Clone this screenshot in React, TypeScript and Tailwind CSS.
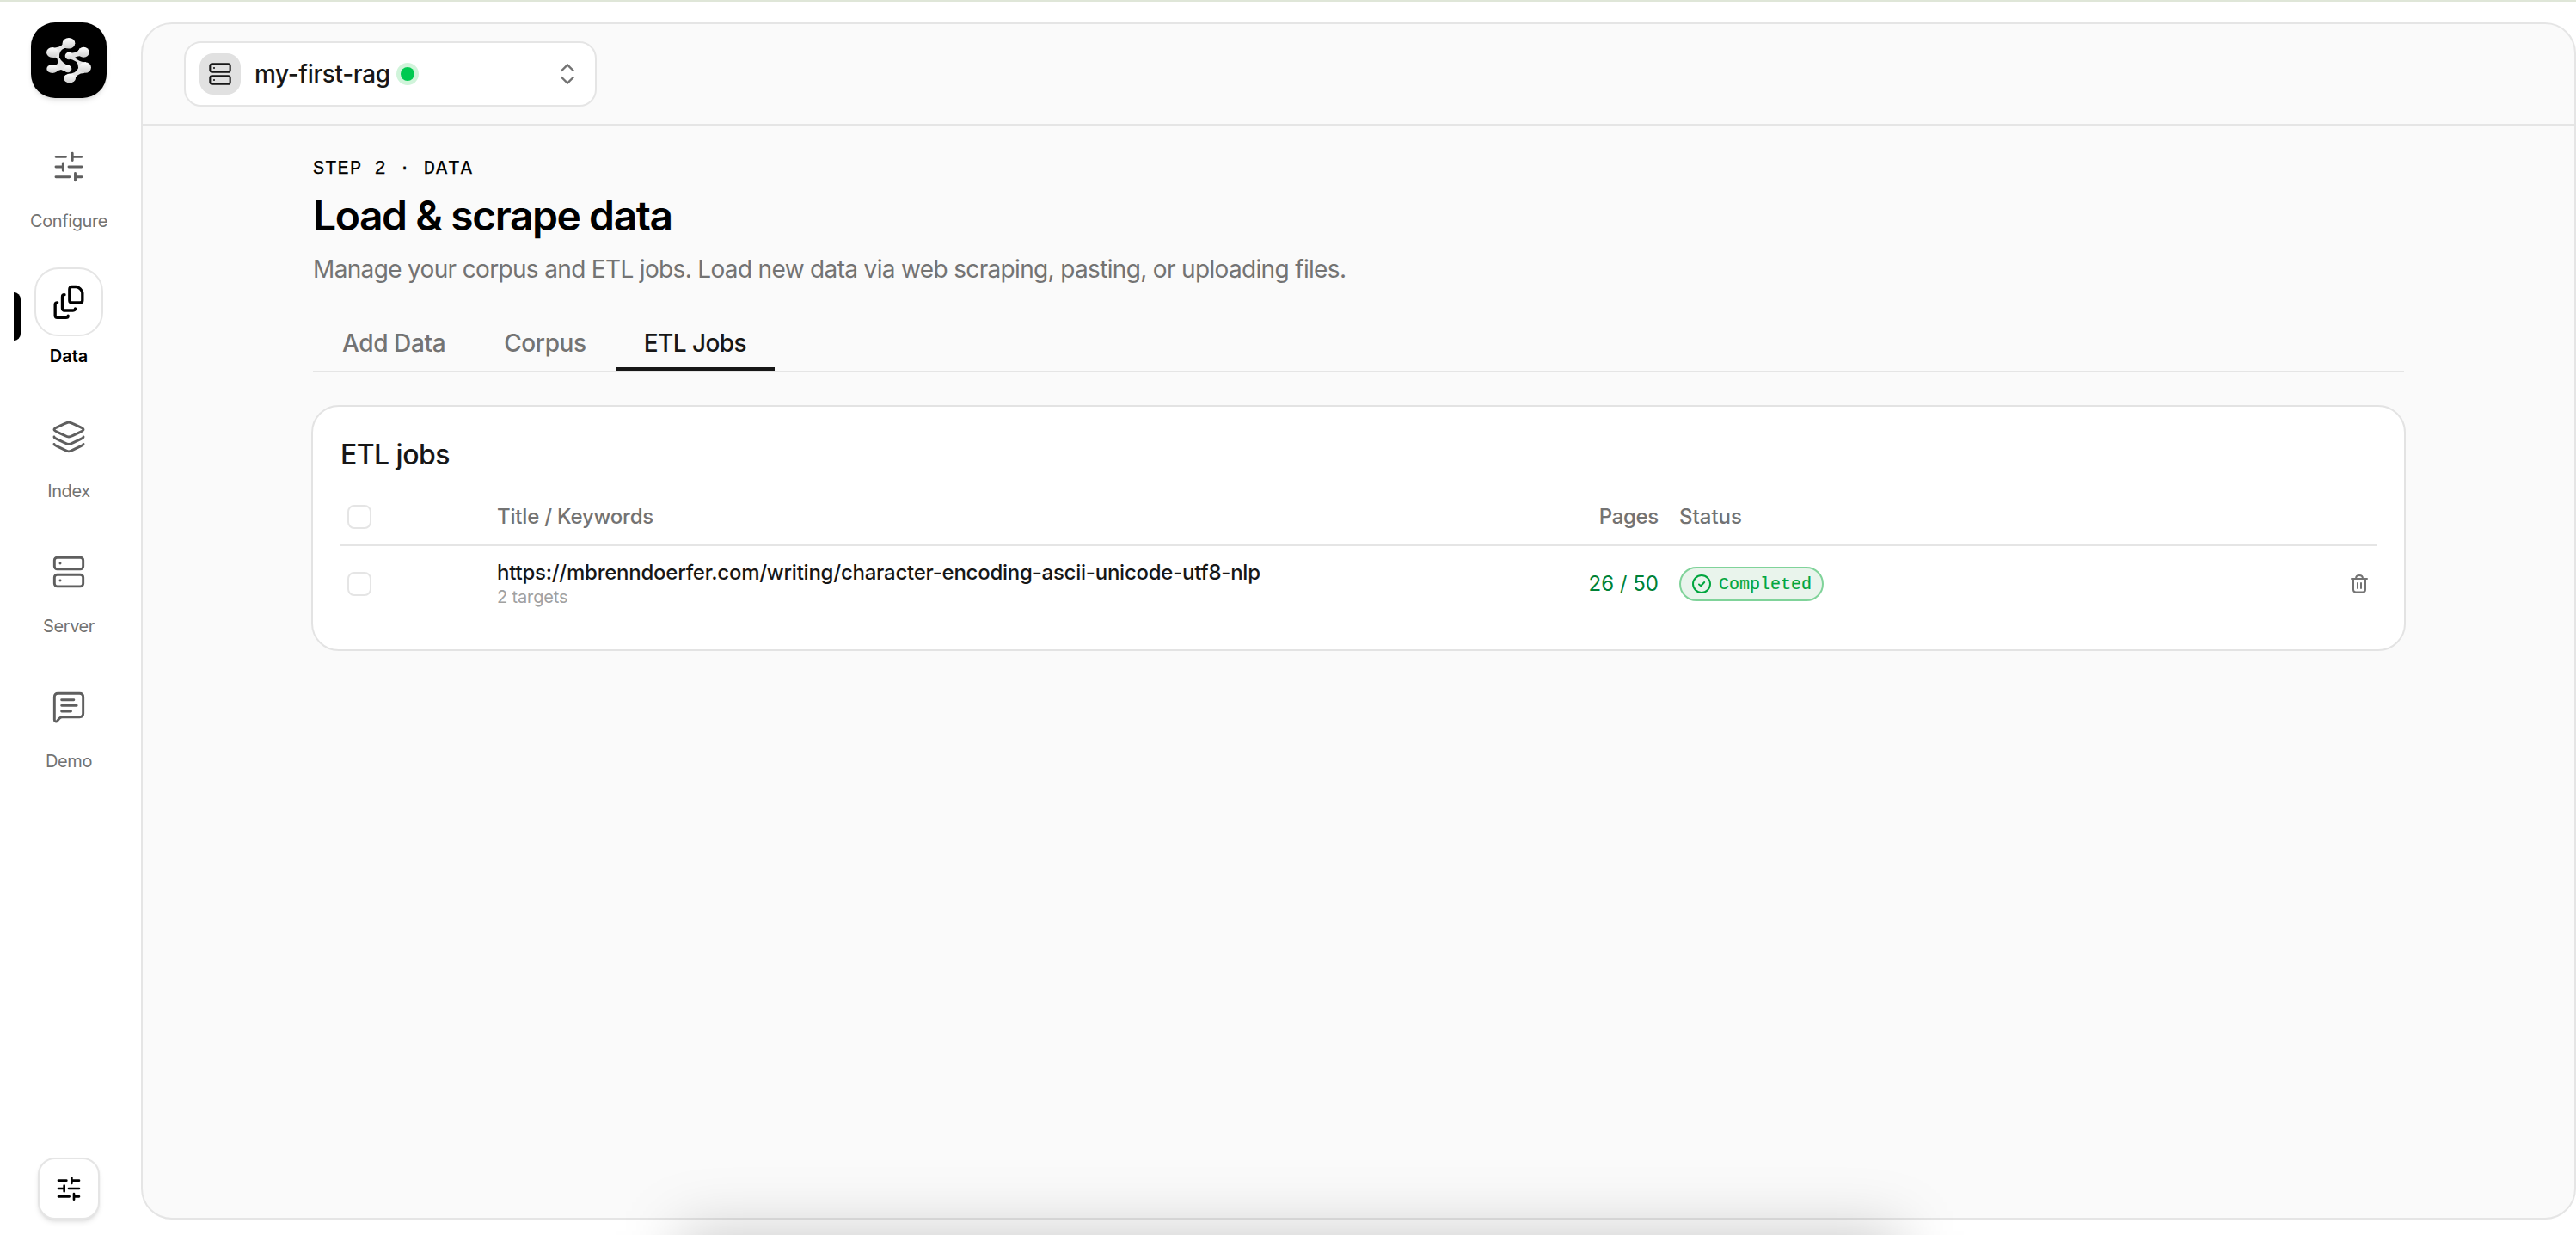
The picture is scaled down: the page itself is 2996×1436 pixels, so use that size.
import React from 'react';
import { ChevronsUpDown } from 'lucide-react';

interface IconProps {
  className?: string;
  strokeWidth?: number;
}

function IconBase({ className, strokeWidth = 1.5, children }: IconProps & { children: React.ReactNode }) {
  return (
    <svg
      viewBox="0 0 24 24"
      fill="none"
      stroke="currentColor"
      strokeWidth={strokeWidth}
      strokeLinecap="round"
      strokeLinejoin="round"
      className={className}
    >
      {children}
    </svg>
  );
}

function SlidersIcon(props: IconProps) {
  return (
    <IconBase {...props}>
      <path d="M3 5h7M14.5 5H21M14.5 2.5v5" />
      <path d="M3 12h5M12 12h9M8 9.5v5" />
      <path d="M3 19h9.5M16.5 19H21M16.5 16.5v5" />
    </IconBase>
  );
}

function FilesIcon(props: IconProps) {
  return (
    <IconBase {...props}>
      <path d="M12.500 3.100c0-1 .6-1.600 1.600-1.600h3c1.800 0 4.400 2.300 4.400 4.400v5c0 1-.6 1.600-1.600 1.600h-5.800c-1 0-1.600-.6-1.600-1.600z" />
      <path d="M9 7c-.9 0-1.500.6-1.500 1.500v8c0 .9.6 1.500 1.500 1.500h6c.9 0 1.500-.5 1.500-1.300" />
      <path d="M4 12.500c-.9 0-1.500.6-1.500 1.500v7.500c0 .9.6 1.500 1.500 1.500h6c.9 0 1.500-.5 1.500-1.300" />
    </IconBase>
  );
}

function LayersIcon(props: IconProps) {
  return (
    <IconBase {...props}>
      <path d="M12 1.800c-.8 0-1.500.3-2.900 1L4 5.200C2.300 6 1.800 6.400 1.800 6.900S2.300 7.800 4 8.600l5.100 2.400c1.400.7 2.100 1 2.900 1s1.500-.3 2.900-1L20 8.600c1.700-.8 2.200-1.200 2.200-1.700S21.700 6 20 5.200l-5.100-2.400c-1.400-.7-2.100-1-2.900-1Z" />
      <path d="M1.800 12c0 .6.6.9 1.700 1.400l5.600 2.700c1.400.7 2.100 1 2.900 1s1.500-.3 2.900-1l5.600-2.700c1.100-.5 1.700-.8 1.700-1.400" />
      <path d="M1.800 17c0 .6.6.9 1.700 1.400l5.600 2.700c1.400.7 2.100 1 2.900 1s1.500-.3 2.900-1l5.600-2.700c1.100-.5 1.700-.8 1.700-1.400" />
    </IconBase>
  );
}

function ServerIcon(props: IconProps) {
  return (
    <IconBase {...props}>
      <rect x="2" y="1.9" width="20" height="8.2" rx="2" />
      <rect x="2" y="13.9" width="20" height="8.2" rx="2" />
      <path d="M6 6h.01M6 18h.01" />
    </IconBase>
  );
}

function MessageIcon(props: IconProps) {
  return (
    <IconBase {...props}>
      <path d="M2 21V5C2 3.500 3 2.500 4.500 2.500h15C21 2.500 22 3.500 22 5v11.500c0 1.500-1 2.500-2.500 2.500H7.500c-1 0-1.500.3-2.200 1.100l-1.300 1.600c-.8.9-2 .6-2-.7Z" />
      <path d="M7 7h8.500M7 11h10.500M7 15h6.500" />
    </IconBase>
  );
}

function Logo() {
  return (
    <svg viewBox="0 0 88 88" className="size-22">
      <defs>
        <linearGradient id="metal" x1="0" y1="0" x2="0" y2="1">
          <stop offset="0" stopColor="#ffffff" />
          <stop offset="1" stopColor="#cfcfcf" />
        </linearGradient>
      </defs>
      {/* Webs joining the two arms of the S */}
      <g fill="#e4e4e4">
        <path d="M37 23Q38 28 28 29.500L26 41Q31 39.500 31 45Q32 50 26 49.500V58Q31 56 35 55L42 58L46 52Q36 47 33 41Q32 33 39 30Q44 30 47 30Z" />
        <path d="M57 30Q54 37 44 35L42 42Q49 43 53 46Q58 53 51 58Q47 60 42 60L50 68Q53 59 62 59L64 46Q57 47 51 41Q54 38 62 40Z" />
      </g>
      <g fill="url(#metal)">
        <ellipse cx="44" cy="24.300" rx="7.300" ry="6.300" />
        <ellipse cx="61.300" cy="34.700" rx="6.500" ry="6" />
        <ellipse cx="25" cy="35" rx="7" ry="6" />
        <ellipse cx="25" cy="54" rx="6.700" ry="5" />
        <ellipse cx="63" cy="52.500" rx="7" ry="6.300" />
        <ellipse cx="45" cy="65" rx="7" ry="5.300" />
        <circle cx="44" cy="39" r="4.300" />
        <circle cx="43" cy="54" r="4.300" />
      </g>
    </svg>
  );
}

const navItems = [
  { label: 'Configure', icon: SlidersIcon, active: false },
  { label: 'Data', icon: FilesIcon, active: true },
  { label: 'Index', icon: LayersIcon, active: false },
  { label: 'Server', icon: ServerIcon, active: false },
  { label: 'Demo', icon: MessageIcon, active: false },
];

const tabs = [
  { label: 'Add Data', active: false },
  { label: 'Corpus', active: false },
  { label: 'ETL Jobs', active: true },
];

export default function App() {
  return (
    <div className="relative flex h-[1436px] w-[2996px] overflow-hidden border-t-2 border-[#dfe6d8] bg-white font-['Inter','Liberation_Sans',sans-serif] text-[#171717]">
      {/* Sidebar */}
      <aside className="flex w-41 shrink-0 flex-col items-center pt-6 pr-1 pb-[18px]">
        <div className="size-22 rounded-[28px] bg-black shadow-md">
          <Logo />
        </div>
        <nav className="mt-10 flex w-full flex-col">
          {navItems.map(({ label, icon: Icon, active }) => (
            <a key={label} className="relative flex h-[157px] flex-col items-center">
              {active && <span className="absolute top-[29px] left-4 h-14 w-2 rounded-r-lg bg-black" />}
              <span
                className={
                  active
                    ? 'flex size-20 items-center justify-center rounded-[28px] border-2 border-[#e5e5e5] bg-white text-black'
                    : 'flex size-20 items-center justify-center text-[#5f5f5f]'
                }
              >
                <Icon className="size-10" strokeWidth={active ? 2 : 1.75} />
              </span>
              <span
                className={
                  active
                    ? 'mt-2 text-[20px] leading-[30px] font-semibold text-black'
                    : 'mt-2 text-[20px] leading-[30px] tracking-[-0.4px] text-[#737373]'
                }
              >
                {label}
              </span>
            </a>
          ))}
        </nav>
        <button className="mt-auto flex size-18 items-center justify-center rounded-[20px] border-2 border-[#e5e5e5] bg-white text-black shadow-md">
          <SlidersIcon className="size-8" strokeWidth={2} />
        </button>
      </aside>

      {/* Main panel */}
      <main className="mt-6 mb-[18px] flex grow flex-col rounded-[36px] border-2 border-[#e5e5e5] bg-[#fafafa]">
        <header className="flex h-[118px] items-start border-b-2 border-[#e5e5e5] pt-5 pl-12">
          <button className="flex h-19 w-[480px] items-center rounded-[20px] border-2 border-[#e5e5e5] bg-white px-4">
            <span className="flex size-12 items-center justify-center rounded-2xl bg-[#e1e1e1]">
              <ServerIcon className="size-7" strokeWidth={1.8} />
            </span>
            <span className="ml-4 text-[28px] leading-10 font-medium tracking-[-0.35px]">my-first-rag</span>
            <span className="ml-[7px] flex size-[26px] items-center justify-center rounded-full bg-[#d0f4da]">
              <span className="size-4 rounded-full bg-[#00c950]" />
            </span>
            <ChevronsUpDown className="ml-auto size-8 text-[#737373]" strokeWidth={1.8} />
          </button>
        </header>

        <div className="mx-auto w-[2436px] pt-[35px]">
          <div className="px-0.5">
            <p className="font-['Liberation_Mono',monospace] text-[22px] leading-8 tracking-[1.1px] text-black [-webkit-text-stroke:0.25px]">
              STEP 2 · DATA
            </p>
            <h1 className="mt-2 text-[48px] leading-15 font-semibold tracking-[-1.44px] text-black">
              Load &amp; scrape data
            </h1>
            <p className="mt-3 text-[28px] leading-10 tracking-[-0.66px] text-[#737373]">
              Manage your corpus and ETL jobs. Load new data via web scraping, pasting, or uploading files.
            </p>
            <div className="mt-8 flex h-[68px] border-b-2 border-[#e5e5e5] text-[28px] leading-10 font-medium tracking-[-0.4px]">
              {tabs.map((tab) => (
                <button
                  key={tab.label}
                  className={
                    tab.active
                      ? 'rounded-t-sm border-b-4 border-[#171717] px-[33px] pt-1.5 tracking-[-0.55px]'
                      : 'border-b-4 border-transparent px-[34px] pt-1.5 text-[#737373]'
                  }
                >
                  {tab.label}
                </button>
              ))}
            </div>
          </div>

          {/* Jobs table */}
          <section className="mt-[38px] h-[286px] rounded-[32px] border-2 border-[#e3e3e3] bg-white px-8 pt-9">
            <h2 className="text-[32px] leading-10 font-medium tracking-[-0.55px]">ETL jobs</h2>
            <div className="mt-5 flex h-[66px] items-center border-b-2 border-[#e5e5e5] text-[24px] font-medium text-[#737373]">
              <span className="ml-2 size-7 rounded-lg border-2 border-[#e5e5e5]" />
              <span className="ml-[146px] w-[1200px] tracking-[-0.2px]">Title / Keywords</span>
              <span className="w-[151px] text-right tracking-[-0.3px]">Pages</span>
              <span className="ml-6">Status</span>
            </div>
            <div className="flex h-[88px] items-center">
              <span className="ml-2 size-7 rounded-lg border-2 border-[#e5e5e5]" />
              <div className="ml-[146px] w-[1200px] pt-0.5">
                <p className="text-[24px] leading-7 font-medium tracking-[-0.24px]">
                  https://mbrenndoerfer.com/writing/character-encoding-ascii-unicode-utf8-nlp
                </p>
                <p className="text-[20px] leading-7 tracking-[-0.15px] text-[#a1a1a1]">2 targets</p>
              </div>
              <span className="w-[151px] text-right text-[24px] text-[#008236]">26 / 50</span>
              <span className="ml-6 flex h-10 w-[168px] items-center rounded-full border-2 border-[#80d39a] bg-[#e9f4ec] pl-3 font-['Liberation_Mono',monospace] text-[20px] text-[#00a63e] [-webkit-text-stroke:0.2px]">
                <IconBase className="mr-2 size-6" strokeWidth={2}>
                  <circle cx="12" cy="12" r="10" />
                  <path d="m9 12.500 2.200 1.800 4-4.300" />
                </IconBase>
                <span className="pt-0.5">Completed</span>
              </span>
              <IconBase className="mr-2 ml-auto size-6 text-[#737373]" strokeWidth={2}>
                <path d="M3 6h18M5 6v12.500c0 2 1 3 3 3h8c2 0 3-1 3-3V6M8 6C8 3 9 2 12 2s4 1 4 4M10 11v6M14 11v6" />
              </IconBase>
            </div>
          </section>
        </div>
      </main>

      {/* Soft shadow rising from below the bottom edge */}
      <div className="absolute top-[1429px] left-[790px] h-40 w-[1420px] bg-black/20 blur-[35px]" />
    </div>
  );
}
